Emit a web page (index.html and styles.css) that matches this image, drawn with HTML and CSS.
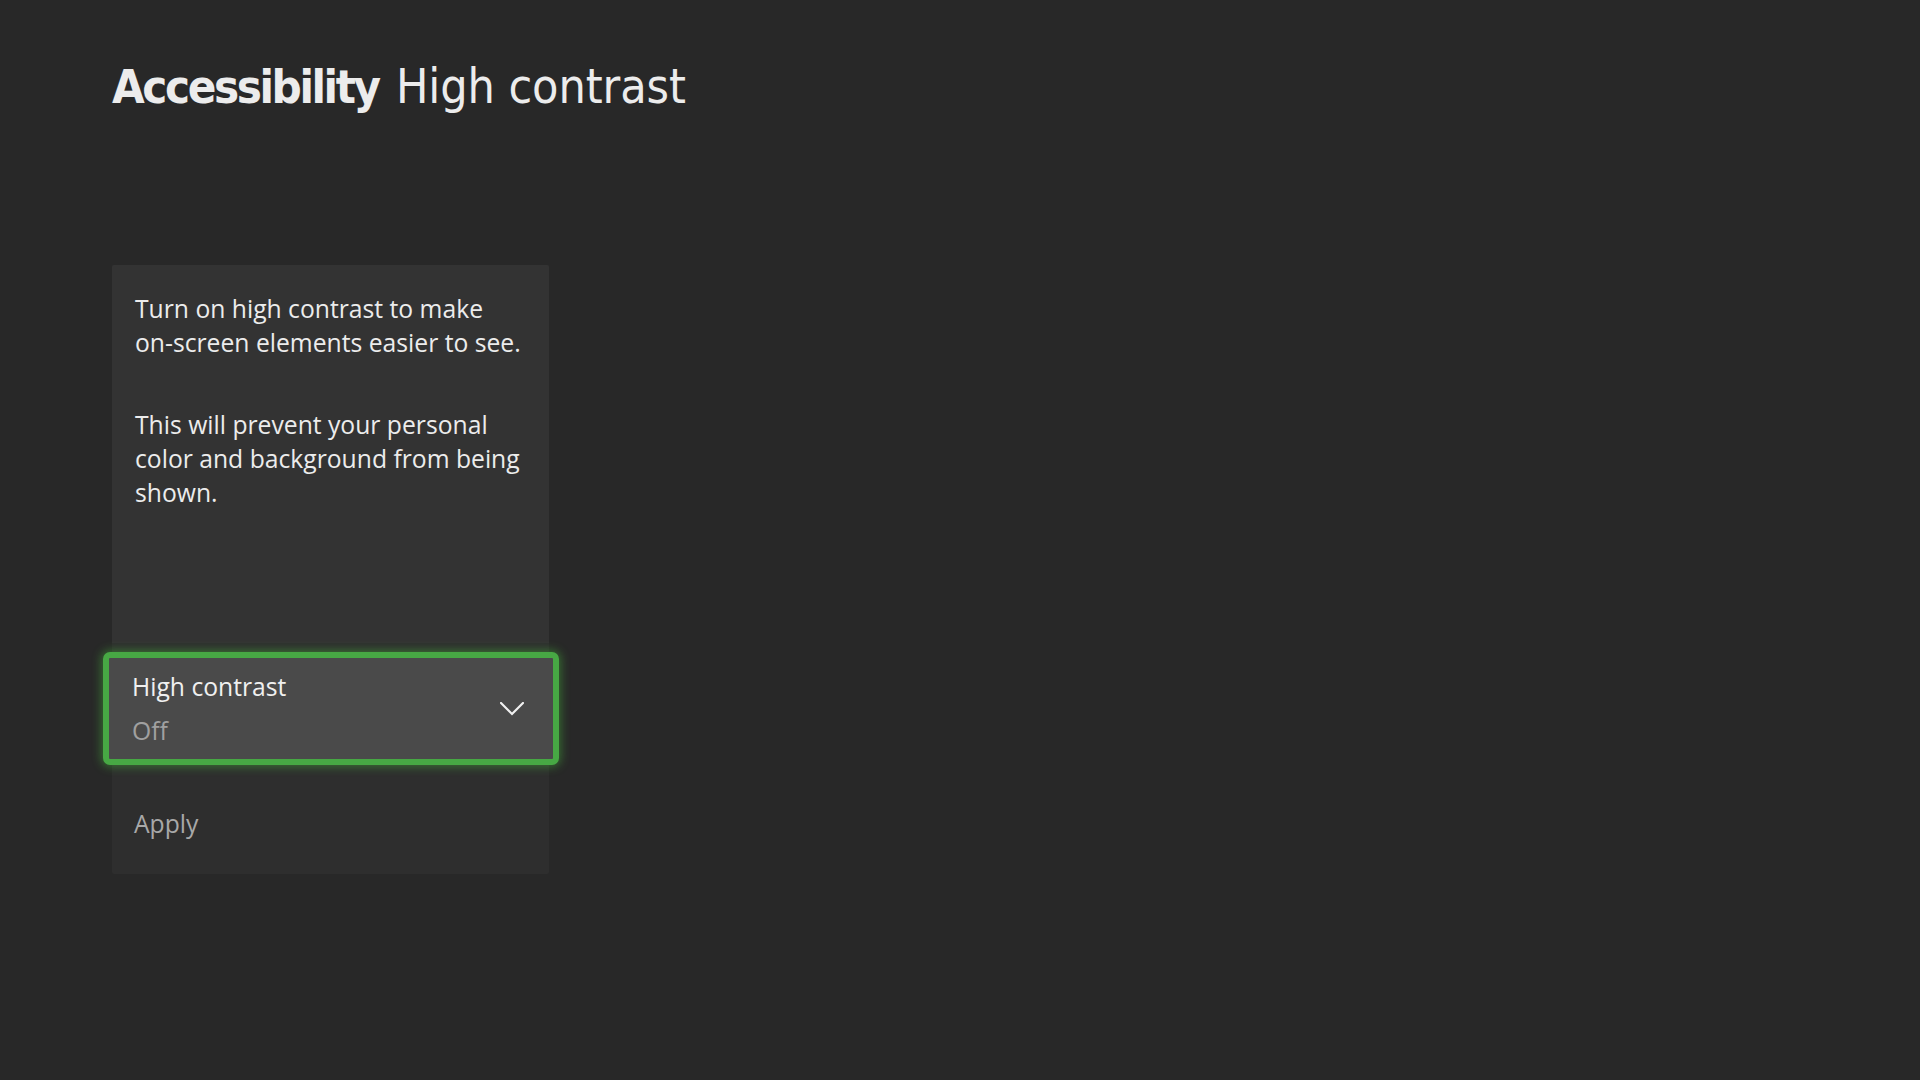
FILE: index.html
```html
<!DOCTYPE html>
<html lang="en">
<head>
<meta charset="utf-8">
<title>Accessibility High contrast</title>
<link rel="stylesheet" href="styles.css">
</head>
<body>
<main class="page">
  <h1 class="title"><span class="title-strong">Accessibility</span> <span class="title-light">High contrast</span></h1>
  <section class="panel">
    <div class="panel-desc">
      <p>Turn on high contrast to make<br>on-screen elements easier to see.</p>
      <p>This will prevent your personal<br>color and background from being<br>shown.</p>
    </div>
    <div class="dropdown">
      <div class="dd-text">
        <span class="dd-label">High contrast</span>
        <span class="dd-value">Off</span>
      </div>
      <svg class="dd-chevron" width="24" height="14" viewBox="0 0 24 14" aria-hidden="true">
        <polyline points="1,1 12,12 23,1" fill="none" stroke="#f0f0f0" stroke-width="2.2" stroke-linecap="square"/>
      </svg>
    </div>
    <div class="apply">Apply</div>
  </section>
</main>
</body>
</html>
```
FILE: styles.css
```css
html, body {
  margin: 0;
  padding: 0;
}
body {
  background: #282828;
  color: #ececec;
  font-family: "Open Sans", "Noto Sans", sans-serif;
  width: 1920px;
  height: 1080px;
  overflow: hidden;
}
.page {
  padding-left: 112px;
  padding-top: 62px;
}
.title {
  margin: 0;
  height: 48px;
  font-family: "DejaVu Sans", sans-serif;
  font-size: 48px;
  line-height: 48px;
  font-weight: normal;
  color: #ececec;
  letter-spacing: 0;
  white-space: nowrap;
}
.title-strong {
  font-weight: bold;
  font-stretch: condensed;
  font-size: 47px;
  letter-spacing: -2.4px;
  margin-right: 2px;
}
.title-light {
  font-weight: normal;
  font-stretch: condensed;
  letter-spacing: -0.1px;
}
.panel {
  margin-top: 155px;
  width: 437px;
  background: #2e2e2e;
  border-radius: 2px;
  display: flex;
  flex-direction: column;
}
.panel-desc {
  background: #333333;
  height: 378px;
  box-sizing: border-box;
  padding: 27px 20px 0 23px;
  border-radius: 2px 2px 0 0;
}
.panel-desc p {
  margin: 0 0 48px 0;
  font-size: 24.7px;
  line-height: 34px;
  color: #ececec;
  white-space: nowrap;
}
.dropdown {
  margin: 9px -10px 0 -9px;
  height: 101px;
  background: #4a4a4a;
  border: 6px solid #47a844;
  border-radius: 7px;
  box-shadow: 0 0 10px 2px rgba(70, 190, 60, 0.45);
  display: flex;
  align-items: center;
  justify-content: space-between;
  padding: 0 29px 0 23px;
}
.dd-text {
  display: flex;
  flex-direction: column;
  gap: 10px;
  padding-top: 1px;
}
.dd-label {
  font-size: 24.7px;
  line-height: 34px;
  color: #f0f0f0;
}
.dd-value {
  font-size: 24.7px;
  line-height: 34px;
  color: #a0a0a0;
}
.dd-chevron {
  display: block;
}
.apply {
  padding: 42px 22px 33px 22px;
  font-size: 24.7px;
  line-height: 34px;
  color: #a8a8a8;
}
```
